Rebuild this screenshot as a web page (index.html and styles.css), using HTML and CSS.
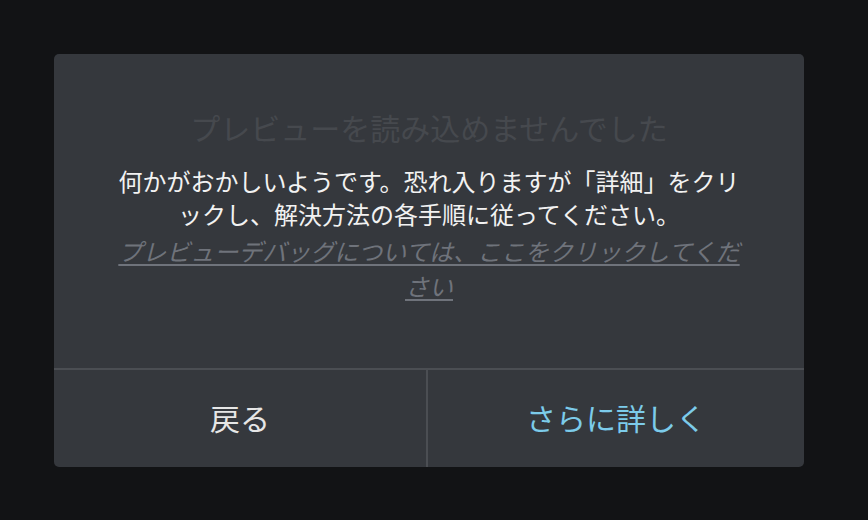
FILE: index.html
```html
<!DOCTYPE html>
<html lang="ja">
  <head>
    <meta charset="UTF-8" />
    <meta name="viewport" content="width=device-width, initial-scale=1.0" />
    <title>プレビュー</title>
    <link rel="stylesheet" href="styles.css">
  </head>
  <body>
    <div class="dialog">
      <div class="dialog-body">
        <h1 class="dialog-title">プレビューを読み込めませんでした</h1>
        <p class="dialog-text">何かがおかしいようです。恐れ入りますが「詳細」をクリックし、解決方法の各手順に従ってください。</p>
        <a class="dialog-link" href="#">プレビューデバッグについては、ここをクリックしてください</a>
      </div>
      <div class="dialog-actions">
        <button class="action">戻る</button>
        <button class="action action-primary">さらに詳しく</button>
      </div>
    </div>
  </body>
</html>
```

FILE: styles.css
```css
body {
  margin: 0;
  padding: 54px 0 0 54px;
  background-color: #121315;
  font-family: "Noto Sans CJK JP", "Noto Sans", sans-serif;
  height: 520px;
  box-sizing: border-box;
}

.dialog {
  width: 750px;
  height: 413px;
  background-color: #35383d;
  border-radius: 5px;
  display: flex;
  flex-direction: column;
  overflow: hidden;
}

.dialog-body {
  flex: 1;
  padding: 53px 60px 0;
  text-align: center;
}

.dialog-title {
  margin: 0;
  font-size: 30px;
  font-weight: normal;
  line-height: 40px;
  color: #46494e;
}

.dialog-text {
  margin: 17px 0 0;
  font-size: 24px;
  line-height: 33px;
  color: #f2f2f2;
}

.dialog-link {
  display: block;
  margin-top: 3px;
  font-size: 24px;
  line-height: 35px;
  font-style: italic;
  color: #6f737b;
  text-decoration: underline;
  text-underline-offset: 3px;
}

.dialog-actions {
  display: flex;
  height: 97px;
  border-top: 2px solid #4b4e53;
}

.action {
  flex: 1;
  background: none;
  border: none;
  font-family: inherit;
  font-size: 30px;
  color: #e6e6e6;
  cursor: pointer;
  padding: 0 0 3px;
}

.action:first-child {
  flex: 0 0 372px;
}

.action-primary {
  border-left: 2px solid #4b4e53;
  color: #7ccbea;
}
```
